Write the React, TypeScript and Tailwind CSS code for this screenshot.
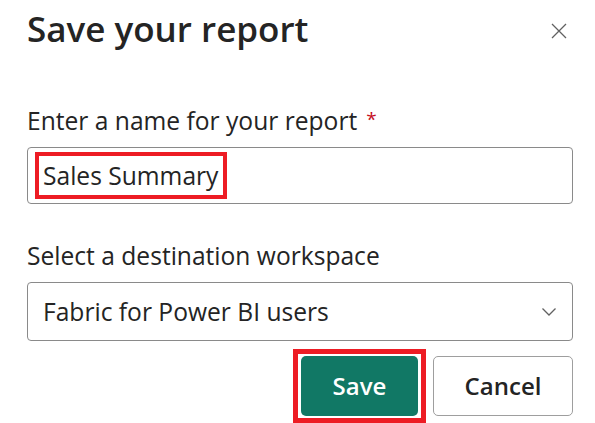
export default function App() {
  return (
    <div
      className="w-[595px] h-[423px] overflow-hidden bg-white pl-[27px] pr-[22px] text-[#242424]"
      style={{ fontFamily: '"Open Sans", "Noto Sans", sans-serif' }}
    >
      {/* Header */}
      <div className="flex items-start justify-between pt-[5px]">
        <h1 className="text-[35px] leading-[48px] font-semibold">Save your report</h1>
        <button className="mt-[12px] flex h-[28px] w-[28px] items-center justify-center text-[#616161]" aria-label="Close">
          <svg width="16" height="16" viewBox="0 0 16 16" fill="none" stroke="currentColor" strokeWidth={1.3}>
            <path d="M1 1l14 14M15 1L1 15" />
          </svg>
        </button>
      </div>

      {/* Report name */}
      <label className="mt-[52px] block h-[32px] text-[24.6px] leading-[32px]">
        Enter a name for your report
        <span className="relative -top-[4px] pl-[9px] text-[19px] leading-none text-[#c50f1f]">*</span>
      </label>
      <div className="relative mt-[10px] flex h-[57px] items-center rounded-[4px] border border-[#8a8a8a] pl-[15px] text-[24.6px] leading-[32px]">
        Sales Summary
        <div className="absolute left-[7px] top-[4px] h-[47px] w-[192px] border-4 border-[#ed1c24]" />
      </div>

      {/* Workspace */}
      <label className="mt-[36px] block text-[24.6px] leading-[32px]">Select a destination workspace</label>
      <div className="mt-[10px] flex h-[59px] items-center justify-between rounded-[4px] border border-[#8a8a8a] pl-[15px] pr-[15px] text-[24.6px] leading-[32px]">
        <span>Fabric for Power BI users</span>
        <svg width="16" height="10" viewBox="0 0 16 10" fill="none" stroke="#616161" strokeWidth={1.3}>
          <path d="M1.5 1.5l6.5 6.5 6.5-6.5" />
        </svg>
      </div>

      {/* Actions */}
      <div className="mt-[15px] flex justify-end gap-[15px]">
        <div className="relative">
          <button className="flex h-[60px] w-[117px] items-center justify-center rounded-[5px] bg-[#117865] text-[24px] font-semibold text-white">
            Save
          </button>
          <div className="absolute -bottom-[7px] -left-[8px] -right-[8px] -top-[7px] border-[5px] border-[#ed1c24]" />
        </div>
        <button className="flex h-[60px] w-[140px] items-center justify-center rounded-[5px] border border-[#9e9e9e] text-[24px] font-semibold">
          Cancel
        </button>
      </div>
    </div>
  );
}
